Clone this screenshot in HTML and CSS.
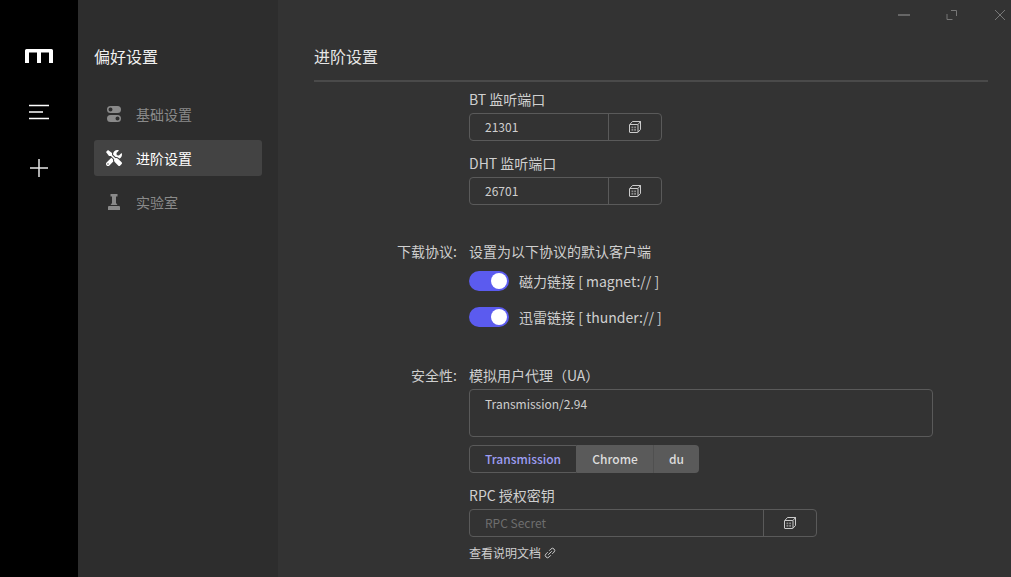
FILE: index.html
```html
<!DOCTYPE html>
<html lang="zh-CN">
<head>
<meta charset="utf-8">
<title>偏好设置</title>
<link rel="stylesheet" href="styles.css">
</head>
<body>
<svg class="defs" width="0" height="0" aria-hidden="true">
  <symbol id="cube" viewBox="0 0 12 12">
    <path d="M1 3.500H8.500Q9 3.500 9 4V11Q9 11.500 8.500 11.500H1Q.5 11.500 .5 11V4Q.5 3.500 1 3.500ZM.8 3.500 3.500 .5H11.500V8.500L9 11.200M9 3.500 11.500 .5" fill="none" stroke="currentColor" stroke-width=".9"/>
    <path d="M2.500 5.500H4.300V7.200H2.500ZM5.200 5.500H7V7.200H5.200ZM2.500 8H4.300V9.700H2.500ZM5.200 8H7V9.700H5.200Z" fill="#8a8a8a"/>
  </symbol>
</svg>
<div class="app">
  <nav class="dock">
    <svg class="logo" width="30" height="14" viewBox="0 0 30 14"><path d="M1 14V1.500Q1 0 2.500 0H27.500Q29 0 29 1.500V14H25V3.500H17V14H13V3.500H5V14Z" fill="#fff"/></svg>
    <svg class="dock-icon" width="22" height="16" viewBox="0 0 22 16"><path d="M1 1.500H21M1 8H15M1 14.500H21" stroke="#fff" stroke-width="1.400" fill="none"/></svg>
    <svg class="dock-icon" width="20" height="20" viewBox="0 0 20 20"><path d="M10 1V19M1 10H19" stroke="#e6e6e6" stroke-width="1.500" fill="none"/></svg>
  </nav>
  <aside class="side">
    <h2 class="side-title">偏好设置</h2>
    <ul class="menu">
      <li class="menu-item">
        <svg class="mi" width="16" height="16" viewBox="0 0 16 16"><path fill-rule="evenodd" fill="currentColor" d="M4.500 0H11.500A3.500 3.500 0 0 1 11.500 7H4.500A3.500 3.500 0 0 1 4.500 0ZM4.500 1.500A2 2 0 1 0 4.500 5.500A2 2 0 1 0 4.500 1.500ZM4.500 9H11.500A3.500 3.500 0 0 1 11.500 16H4.500A3.500 3.500 0 0 1 4.500 9ZM11.500 10.500A2 2 0 1 0 11.500 14.500A2 2 0 1 0 11.500 10.500Z"/></svg>
        <span>基础设置</span>
      </li>
      <li class="menu-item active">
        <svg class="mi" width="16" height="16" viewBox="0 0 512 512"><path fill="currentColor" d="M501.100 395.700L384 278.600c-23.100-23.100-57.600-27.600-85.400-13.900L192 158.100V96L64 0 0 64l96 128h62.100l106.600 106.600c-13.600 27.800-9.200 62.300 13.900 85.400l117.100 117.100c14.600 14.600 38.200 14.600 52.700 0l52.700-52.700c14.500-14.600 14.500-38.200-.1-52.700zM331.700 225c28.300 0 54.900 11 74.900 31l19.400 19.400c15.800-6.900 30.800-16.500 43.800-29.500 37.100-37.100 49.700-89.300 37.900-136.700-2.200-9-13.500-12.100-20.100-5.500l-74.400 74.400-67.900-11.300L334 98.900l74.400-74.400c6.600-6.600 3.400-17.900-5.700-20.200-47.400-11.700-99.600.9-136.600 37.900-28.500 28.500-41.900 66.100-41.200 103.600l82.100 82.100c8.100-1.900 16.500-2.900 24.700-2.900zm-103.900 82l-56.700-56.700L18.700 402.800c-25 25-25 65.500 0 90.500s65.500 25 90.500 0l123.600-123.600c-7.600-19.900-9.900-41.600-5-62.700zM64 472c-13.200 0-24-10.800-24-24 0-13.300 10.700-24 24-24s24 10.700 24 24c0 13.200-10.700 24-24 24z"/></svg>
        <span>进阶设置</span>
      </li>
      <li class="menu-item">
        <svg class="mi" width="16" height="16" viewBox="0 0 16 16"><path fill="currentColor" d="M4.500 0H11.500V2.500H10V9L11.500 11H4.500L6 9V2.500H4.500ZM3 12H13Q14 12 14 13V16H2V13Q2 12 3 12Z"/></svg>
        <span>实验室</span>
      </li>
    </ul>
  </aside>
  <main class="main">
    <div class="win-ctrl">
      <svg width="12" height="12" viewBox="0 0 12 12"><path d="M0 6H12" stroke="#666" stroke-width="2"/></svg>
      <svg width="12" height="12" viewBox="0 0 12 12"><path d="M5 1.500H10.500V7M1 5V10.500H6.500" stroke="#777" stroke-width="1" fill="none"/></svg>
      <svg width="12" height="12" viewBox="0 0 12 12"><path d="M1 1 11 11M11 1 1 11" stroke="#777" stroke-width="1" fill="none"/></svg>
    </div>
    <h3 class="page-title">进阶设置</h3>
    <form class="form">
      <div class="row first">
        <div class="lab"></div>
        <div class="col">
          <div class="field-label">BT 监听端口</div>
          <div class="inp short"><span class="val">21301</span><span class="append"><svg class="cube" width="12" height="12"><use href="#cube"/></svg></span></div>
          <div class="field-label second">DHT 监听端口</div>
          <div class="inp short"><span class="val">26701</span><span class="append"><svg class="cube" width="12" height="12"><use href="#cube"/></svg></span></div>
        </div>
      </div>
      <div class="row proto">
        <div class="lab">下载协议:</div>
        <div class="col">
          <div class="field-label">设置为以下协议的默认客户端</div>
          <div class="switch-row sw1"><span class="switch"><i></i></span><span>磁力链接 [ magnet:// ]</span></div>
          <div class="switch-row sw2"><span class="switch"><i></i></span><span>迅雷链接 [ thunder:// ]</span></div>
        </div>
      </div>
      <div class="row sec">
        <div class="lab">安全性:</div>
        <div class="col">
          <div class="field-label">模拟用户代理（UA）</div>
          <div class="area">Transmission/2.94</div>
          <div class="seg">
            <span class="seg-btn on">Transmission</span><span class="seg-btn chrome">Chrome</span><span class="seg-btn du">du</span>
          </div>
          <div class="field-label rpc">RPC 授权密钥</div>
          <div class="inp wide"><span class="val ph">RPC Secret</span><span class="append"><svg class="cube" width="12" height="12"><use href="#cube"/></svg></span></div>
          <div class="doc">查看说明文档 <svg width="12" height="12" viewBox="0 0 12 12"><g transform="rotate(-45 6 6)" fill="none" stroke="currentColor" stroke-width=".9"><path d="M5 3.800H2.500A2.200 2.200 0 0 0 2.500 8.200H5M7 3.800H9.500A2.200 2.200 0 0 1 9.500 8.200H7M3.500 6H8.500"/></g></svg></div>
        </div>
      </div>
    </form>
  </main>
</div>
</body>
</html>
```
FILE: styles.css
```css
* { box-sizing: border-box; }
html, body { margin: 0; height: 100%; overflow: hidden; }
body { font-family: "Noto Sans CJK SC", "Noto Sans", sans-serif; font-size: 14px; color: #cfcfcf; background: #333; }
.defs { position: absolute; }
.app { display: flex; height: 577px; }
.dock { width: 78px; flex: none; background: #000; display: flex; flex-direction: column; align-items: center; }
.logo { margin-top: 49px; }
.dock-icon { display: block; }
.dock-icon:nth-of-type(2) { margin-top: 41px; }
.dock-icon:nth-of-type(3) { margin-top: 38px; }
.side { width: 200px; flex: none; background: #2d2d2d; padding: 0 16px; }
.side-title { margin: 45px 0 0; font-size: 16px; font-weight: 400; line-height: 22px; color: #f0f0f0; }
.menu { list-style: none; margin: 29px 0 0; padding: 0; }
.menu-item { height: 36px; margin-bottom: 8px; border-radius: 3px; display: flex; align-items: center; padding-left: 12px; color: #8a8a8a; font-size: 14px; }
.menu-item .mi { margin-right: 14px; flex: none; }
.menu-item.active { background: #434343; color: #fff; }
.main { flex: 1; padding: 0 23px 0 36px; position: relative; overflow: hidden; }
.win-ctrl { position: absolute; top: 9px; right: 5px; display: flex; gap: 36px; }
.page-title { margin: 45px 0 0; height: 37px; font-size: 16px; font-weight: 400; line-height: 22px; color: #e6e6e6; border-bottom: 2px solid #4a4a4a; }
.row { display: flex; }
.lab { width: 143px; flex: none; text-align: right; line-height: 20px; color: #cfcfcf; }
.col { margin-left: 12px; flex: none; width: 520px; }
.first { margin-top: 7px; }
.proto { margin-top: 36px; }
.sec { margin-top: 37px; }
.field-label { line-height: 20px; padding-bottom: 2px; color: #cfcfcf; }
.field-label.second { margin-top: 12px; }
.inp { display: flex; height: 28px; margin-top: 2px; border: 1px solid #5a5a5a; border-radius: 4px; font-size: 12px; color: #cfcfcf; }
.short { width: 193px; }
.wide { width: 348px; }
.val { flex: 1; padding-left: 15px; line-height: 26px; }
.ph { color: #6e6e6e; }
.append { width: 53px; flex: none; border-left: 1px solid #5a5a5a; display: flex; align-items: center; justify-content: center; color: #ddd; }
.switch-row { display: flex; align-items: center; height: 22px; }
.sw1 { margin-top: 7px; }
.sw2 { margin-top: 14px; }
.switch { width: 40px; height: 20px; border-radius: 10px; background: #5b5bef; position: relative; margin-right: 10px; flex: none; }
.switch i { position: absolute; right: 2px; top: 2px; width: 16px; height: 16px; border-radius: 50%; background: #fff; }
.area { width: 464px; height: 48px; margin-top: 2px; border: 1px solid #5a5a5a; border-radius: 4px; padding: 5px 15px; font-size: 12px; line-height: 18px; color: #cfcfcf; }
.seg { display: flex; margin-top: 8px; height: 28px; font-size: 12px; font-weight: 500; }
.seg-btn { display: flex; align-items: center; justify-content: center; padding-bottom: 2px; background: #5a5a5a; color: #ddd; border-right: 1px solid #505050; }
.seg-btn.on { width: 108px; background: #333; color: #9d9df2; border: 1px solid #5a5a5a; border-radius: 4px 0 0 4px; }
.chrome { width: 77px; }
.du { width: 45px; border-right: 0; border-radius: 0 4px 4px 0; }
.rpc { margin-top: 12px; }
.doc { margin-top: 7px; font-size: 12px; line-height: 18px; color: #cfcfcf; display: flex; align-items: center; gap: 3px; }
```
